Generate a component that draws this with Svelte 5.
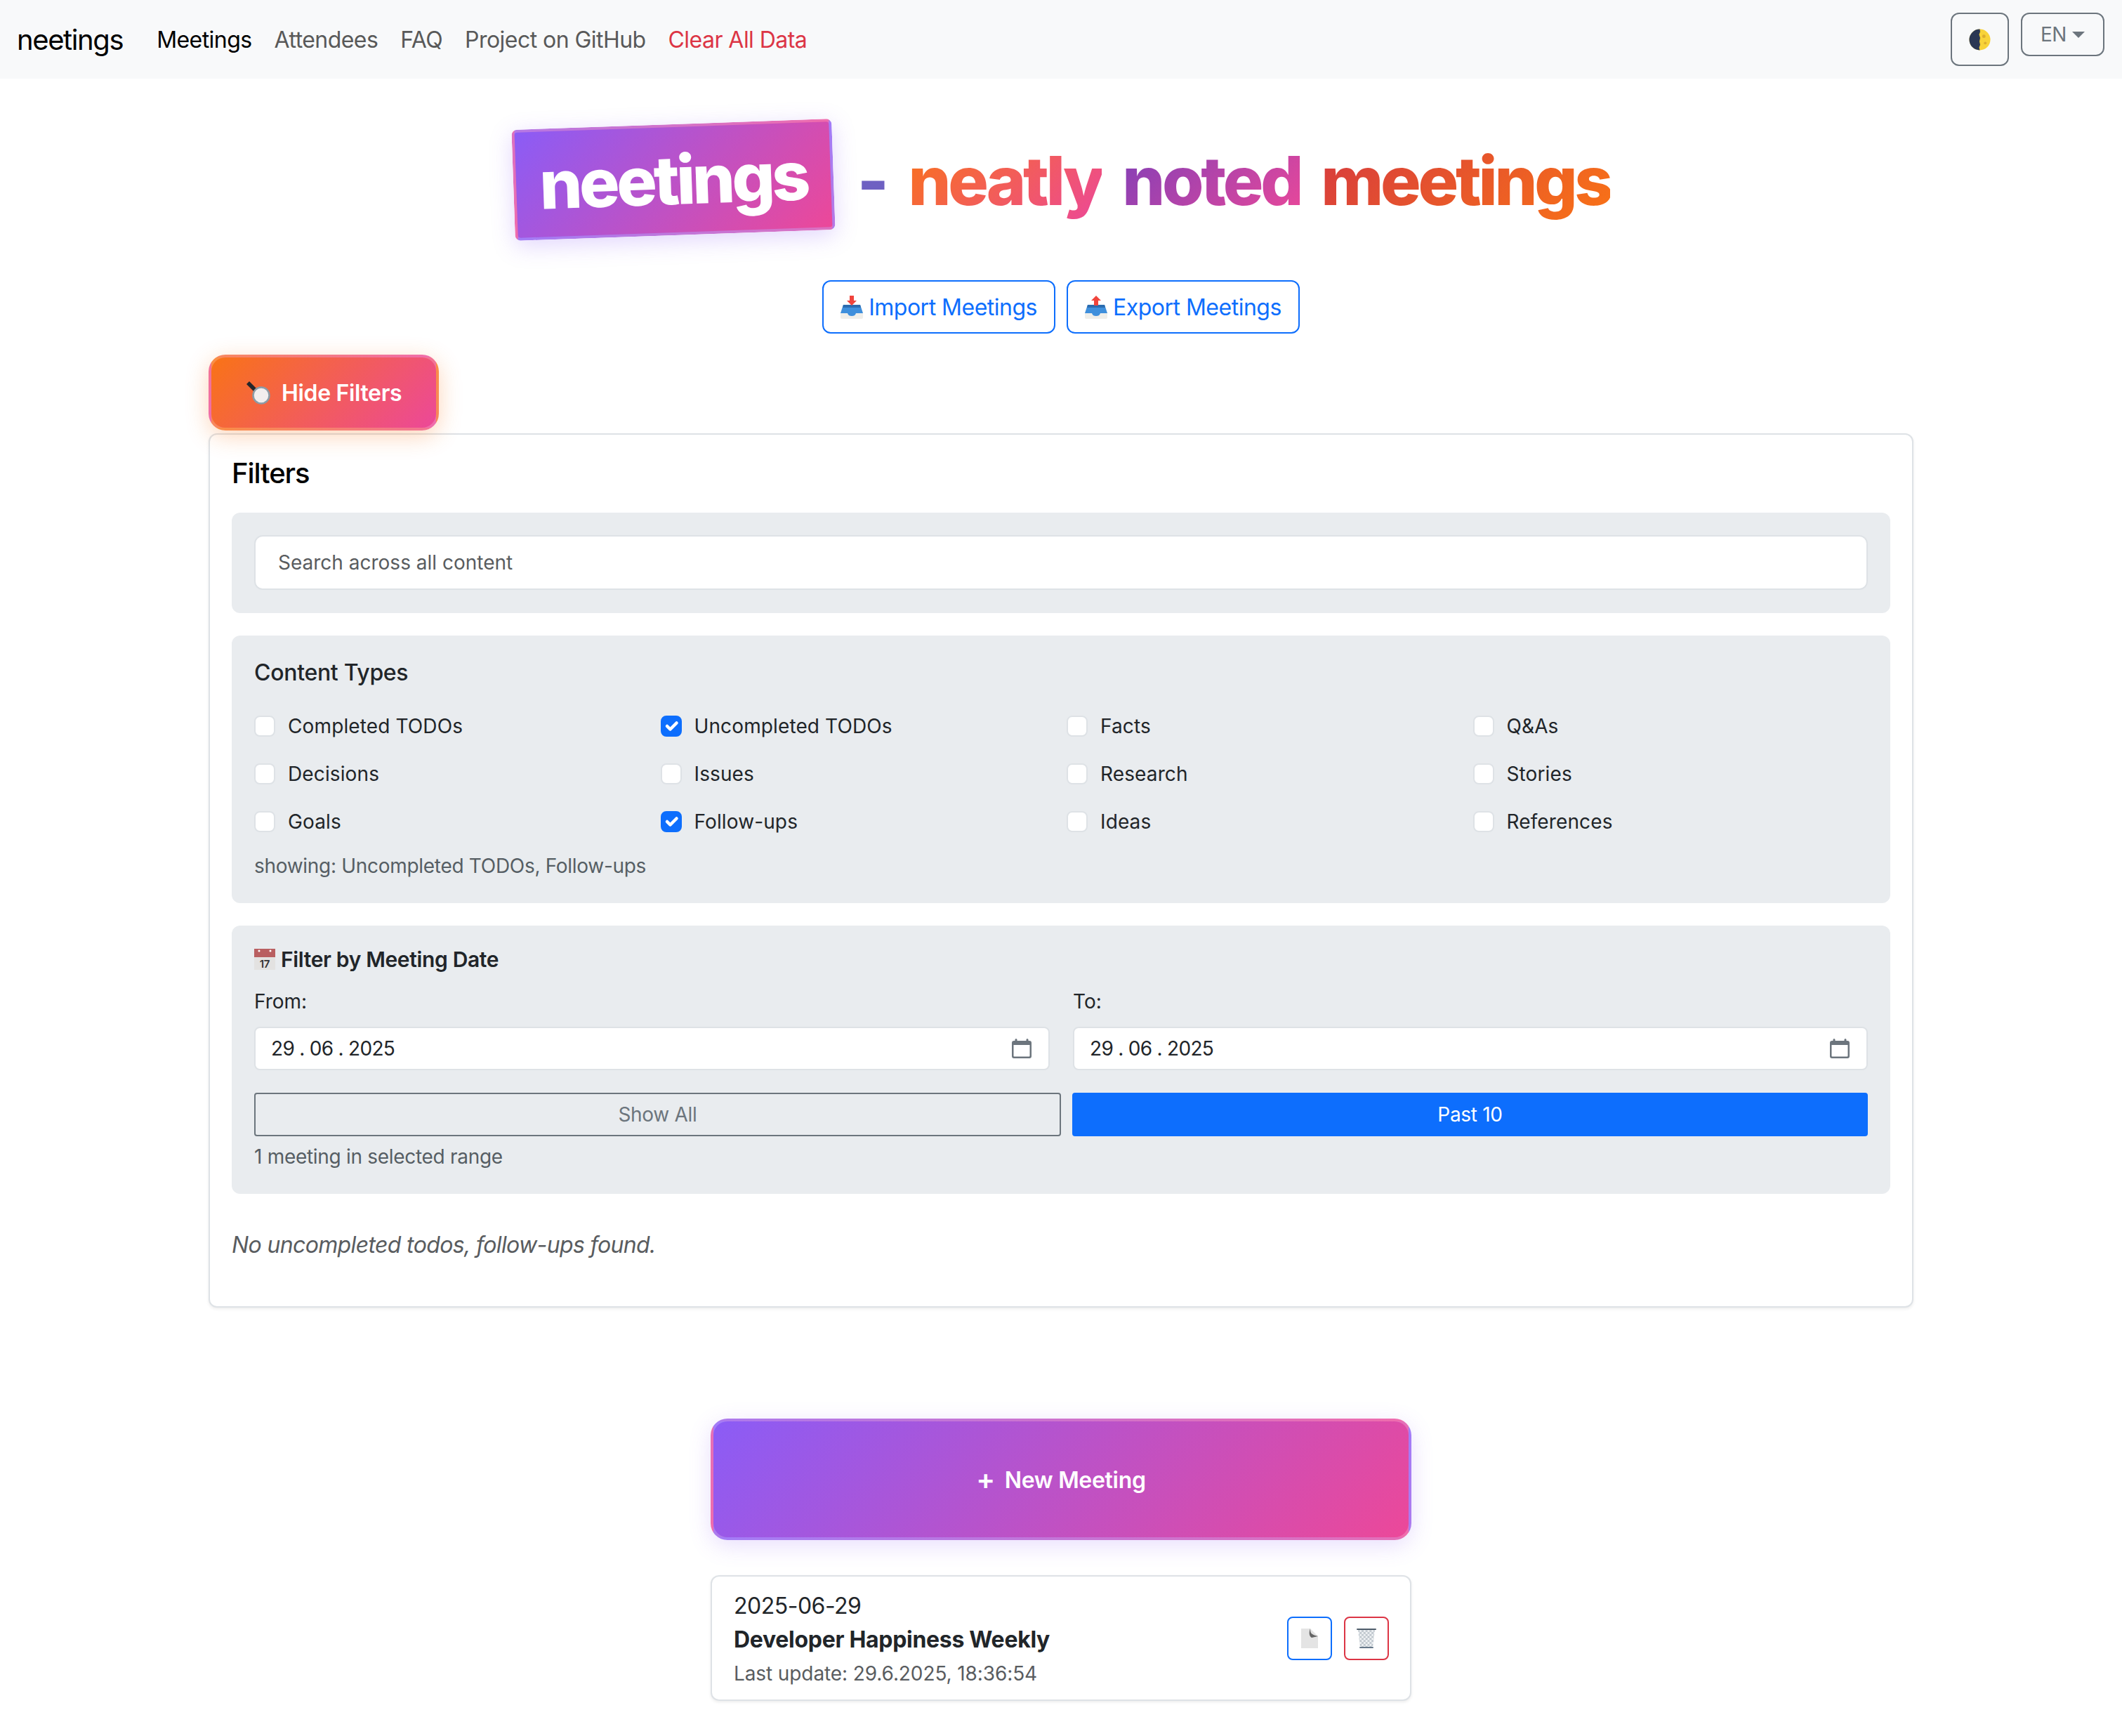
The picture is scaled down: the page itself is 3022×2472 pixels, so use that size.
<script lang="ts">
  const navLinks = [
    { label: 'Meetings', kind: 'active' },
    { label: 'Attendees', kind: '' },
    { label: 'FAQ', kind: '' },
    { label: 'Project on GitHub', kind: '' },
    { label: 'Clear All Data', kind: 'danger' }
  ];
  const contentTypes = [
    { label: 'Completed TODOs', on: false },
    { label: 'Uncompleted TODOs', on: true },
    { label: 'Facts', on: false },
    { label: 'Q&As', on: false },
    { label: 'Decisions', on: false },
    { label: 'Issues', on: false },
    { label: 'Research', on: false },
    { label: 'Stories', on: false },
    { label: 'Goals', on: false },
    { label: 'Follow-ups', on: true },
    { label: 'Ideas', on: false },
    { label: 'References', on: false }
  ];
  const dates = [{ label: 'From:' }, { label: 'To:' }];
</script>

{#snippet tray(up: boolean)}
  <svg class="tray" viewBox="0 0 32 34" aria-hidden="true">
    <path d="M2 18h28l2 8v6a2 2 0 0 1-2 2H2a2 2 0 0 1-2-2v-6z" fill="#efeeea" />
    <path d="M4 14h24l4 12H22c-1 3-3 4-6 4s-5-1-6-4H0z" fill="#3f8fdc" />
    <path d="M4 14h24l1 4H3z" fill="#2b6cb0" />
    {#if up}
      <path d="M16 1l7 7h-4v7h-6V8H9z" fill="#f0443c" />
    {:else}
      <path d="M13 1h6v7h4l-7 7-7-7h4z" fill="#f0443c" />
    {/if}
  </svg>
{/snippet}

{#snippet calendar()}
  <svg class="cal" viewBox="0 0 28 28" aria-hidden="true">
    <path fill="#6c757d" d="M6 0a1.500 1.500 0 0 1 1.500 1.500V3h13V1.500a1.500 1.500 0 0 1 3 0V3H25a3 3 0 0 1 3 3v19a3 3 0 0 1-3 3H3a3 3 0 0 1-3-3V6a3 3 0 0 1 3-3h1.500V1.500A1.500 1.500 0 0 1 6 0zM2.500 9v15.500a1 1 0 0 0 1 1h21a1 1 0 0 0 1-1V9z" />
  </svg>
{/snippet}

<nav class="navbar">
  <span class="brand">neetings</span>
  <ul class="links">
    {#each navLinks as link}
      <li class={link.kind}>{link.label}</li>
    {/each}
  </ul>
  <div class="nav-tools">
    <button class="tool theme" aria-label="Toggle theme">
      <svg viewBox="0 0 32 32" aria-hidden="true">
        <circle cx="16" cy="16" r="15.500" fill="#f8d339" />
        <path d="M16 .5a15.500 15.500 0 0 0 0 31l-1-4 1.500-4-1-5 1-5-1.500-5 1.500-4z" fill="#2a3754" />
        <circle cx="22" cy="11" r="2.500" fill="#dcae2e" />
        <circle cx="24" cy="21" r="2" fill="#dcae2e" />
      </svg>
    </button>
    <button class="tool lang">EN<span class="caret"></span></button>
  </div>
</nav>

<main class="page">
  <header class="hero">
    <span class="badge">neetings</span>
    <span class="dash">-</span>
    <h1 class="tagline">
      <span class="word w1">neatly</span>
      <span class="word w2">noted</span>
      <span class="word w3">meetings</span>
    </h1>
  </header>

  <div class="io">
    <button class="outline">{@render tray(false)}Import Meetings</button>
    <button class="outline">{@render tray(true)}Export Meetings</button>
  </div>

  <button class="hide">
    <svg viewBox="0 0 36 34" aria-hidden="true">
      <path d="M2 5l4-4 13 13-4 4z" fill="#23262b" />
      <circle cx="23" cy="21" r="11.500" fill="#f2eeee" stroke="#8c9ba6" stroke-width="2.500" />
    </svg>
    Hide Filters
  </button>

  <section class="card filters">
    <h5>Filters</h5>

    <div class="panel search">
      <input type="text" placeholder="Search across all content" />
    </div>

    <div class="panel types">
      <h6>Content Types</h6>
      <div class="grid">
        {#each contentTypes as t}
          <label class="opt">
            <span class="box" class:on={t.on}>
              {#if t.on}
                <svg viewBox="0 0 20 20" aria-hidden="true"><path fill="none" stroke="#fff" stroke-linecap="round" stroke-linejoin="round" stroke-width="3" d="M6 10l3 3 6-6" /></svg>
              {/if}
            </span>
            {t.label}
          </label>
        {/each}
      </div>
      <p class="muted">showing: Uncompleted TODOs, Follow-ups</p>
    </div>

    <div class="panel range">
      <div class="range-title">
        <svg viewBox="0 0 30 30" aria-hidden="true">
          <rect width="30" height="30" fill="#e3e2e1" />
          <rect width="30" height="12" fill="#b95f61" />
          <circle cx="7" cy="3" r="1.500" fill="#fff" />
          <circle cx="23" cy="3" r="1.500" fill="#fff" />
          <text x="15" y="27" text-anchor="middle" font-size="15" fill="#333">17</text>
        </svg>
        Filter by Meeting Date
      </div>
      <div class="dates">
        {#each dates as d}
          <div class="field">
            <span class="field-label">{d.label}</span>
            <div class="date">29 . 06 . 2025 {@render calendar()}</div>
          </div>
        {/each}
      </div>
      <div class="quick">
        <button class="show-all">Show All</button>
        <button class="past">Past 10</button>
      </div>
      <p class="muted">1 meeting in selected range</p>
    </div>

    <p class="none">No uncompleted todos, follow-ups found.</p>
  </section>

  <div class="meetings">
    <button class="new"><span class="plus">+</span> New Meeting</button>
    <article class="card meeting">
      <div class="info">
        <div class="m-date">2025-06-29</div>
        <div class="m-title">Developer Happiness Weekly</div>
        <div class="m-update">Last update: 29.6.2025, 18:36:54</div>
      </div>
      <div class="actions">
        <button class="act blue" aria-label="Open">
          <svg viewBox="0 0 24 28" aria-hidden="true">
            <path d="M0 0h13l11 11v17H0z" fill="#e4e4e4" />
            <path d="M13 0c0 5 1 7 3 8 3 2 6 2 8 3l-9 2c-4-2-4-8-2-13z" fill="#666" />
          </svg>
        </button>
        <button class="act red" aria-label="Delete">
          <svg viewBox="0 0 28 28" aria-hidden="true">
            <defs>
              <pattern id="mesh" width="4" height="4" patternUnits="userSpaceOnUse" patternTransform="rotate(45)">
                <rect width="4" height="4" fill="#eef1f3" />
                <path d="M0 0h4M0 0v4" stroke="#8a97a3" stroke-width="1" />
              </pattern>
            </defs>
            <path d="M2 1h24l-3 26H5z" fill="url(#mesh)" />
            <rect x="0" y="0" width="28" height="2" rx="1" fill="#4f5d6b" />
            <rect x="4" y="26" width="20" height="2" rx="1" fill="#66788a" />
          </svg>
        </button>
      </div>
    </article>
  </div>
</main>

<style>
  :global(body) { margin: 0; background: #fff; color: #212529; font-family: Inter, 'Liberation Sans', sans-serif; font-size: 32px; line-height: 1.5; letter-spacing: -0.5px; }
  button { font-family: inherit; letter-spacing: inherit; cursor: pointer; }
  p, h1, h5, h6, ul { margin: 0; padding: 0; }

  .navbar { height: 112px; box-sizing: border-box; background: #f8f9fa; display: flex; align-items: center; padding: 2px 25px 0 24px; }
  .brand { font-size: 40px; color: #000; margin-right: 48px; letter-spacing: -1.400px; }
  .links { list-style: none; display: flex; gap: 32px; color: #595959; letter-spacing: -0.550px; }
  .links .active { color: #000; }
  .links .danger { color: #dc3545; }
  .nav-tools { margin-left: auto; display: flex; gap: 17px; align-items: flex-start; align-self: flex-start; padding-top: 16px; }
  .tool { border: 2px solid #6c757d; border-radius: 12px; background: transparent; color: #6c757d; padding: 0; display: flex; align-items: center; justify-content: center; }
  .theme { width: 83px; height: 76px; }
  .theme svg { width: 31px; height: 31px; }
  .lang { width: 119px; height: 62px; font-size: 28px; gap: 8px; }
  .caret { border-top: 9px solid #6c757d; border-left: 9px solid transparent; border-right: 9px solid transparent; }

  .page { width: 2428px; margin: 0 auto; padding-bottom: 50px; }

  .hero { display: flex; align-items: center; justify-content: center; padding-top: 58px; height: 170px; gap: 36px; }
  .badge { display: block; width: 456px; height: 158px; margin-top: 2px; box-sizing: border-box; text-align: center; line-height: 150px; font-size: 96px; font-weight: 800; letter-spacing: -4.500px; color: #fff; border: 4px solid rgba(255, 255, 255, 0.2); border-radius: 8px; background: linear-gradient(135deg, #8b5cf6, #ec4899); transform: translateX(2px) rotate(-2deg); box-shadow: 0 8px 32px rgba(139, 92, 246, 0.25); }
  .dash { font-size: 96px; font-weight: 800; color: #6e60c2; line-height: 1; margin-right: -8px; margin-top: 4px; }
  .tagline { display: flex; gap: 29px; font-size: 96px; font-weight: 800; letter-spacing: -4.200px; line-height: 1.25; margin-top: 4px; }
  .word { background-clip: text; -webkit-background-clip: text; color: transparent; }
  .w1 { background-image: linear-gradient(135deg, #f97316, #ec4899); }
  .w2 { background-image: linear-gradient(135deg, #7e3fb8, #ec4899); }
  .w3 { background-image: linear-gradient(135deg, #d63a3f, #f97316); }

  .io { display: flex; justify-content: center; gap: 16px; margin-top: 59px; }
  .outline { height: 76px; padding: 0 24px; display: flex; align-items: center; gap: 8px; font-size: 32px; color: #0d6efd; background: #fff; border: 2px solid #0d6efd; border-radius: 12px; }
  .tray { width: 32px; height: 34px; }

  .hide { display: flex; align-items: center; gap: 16px; margin-top: 30px; width: 328px; height: 108px; box-sizing: border-box; padding: 0 0 0 48px; font-size: 32px; font-weight: 600; color: #fff; letter-spacing: -0.350px; border: 4px solid rgba(255, 255, 255, 0.2); border-radius: 24px; background: linear-gradient(135deg, #f97316, #ec4899); box-shadow: 0 8px 32px rgba(249, 115, 22, 0.3); position: relative; }
  .hide svg { width: 36px; height: 34px; }

  .card { background: #fff; border: 2px solid #dee2e6; border-radius: 12px; box-shadow: 0 2px 4px rgba(0, 0, 0, 0.075); box-sizing: border-box; }
  .filters { margin-top: 4px; padding: 31px 31px 48px; height: 1245px; }
  h5 { font-size: 40px; font-weight: 500; line-height: 1.2; color: #000; margin-bottom: 32px; letter-spacing: -1.100px; }
  .panel { background: #e9ecef; border-radius: 12px; padding: 32px; margin-bottom: 32px; }
  .search { height: 143px; box-sizing: border-box; }
  .search input { display: block; width: 100%; height: 78px; box-sizing: border-box; padding: 0 32px; font: inherit; font-size: 28px; letter-spacing: 0; border: 2px solid #dee2e6; border-radius: 12px; background: #fff; }
  .search input::placeholder { color: #595c5f; opacity: 1; }

  .types { height: 381px; box-sizing: border-box; padding-top: 34px; }
  h6 { font-size: 32px; font-weight: 500; line-height: 1.2; margin-bottom: 33px; letter-spacing: -0.300px; }
  .grid { display: grid; grid-template-columns: repeat(4, 578.500px); row-gap: 20px; }
  .opt { display: flex; align-items: center; gap: 18px; height: 48px; font-size: 28px; letter-spacing: 0.120px; }
  .box { width: 30px; height: 30px; box-sizing: border-box; border: 2px solid #dee2e6; border-radius: 8px; background: #fff; display: block; }
  .box svg { display: block; width: 30px; height: 30px; margin: -2px; }
  .box.on { background: #0d6efd; border-color: #0d6efd; }
  .muted { font-size: 28px; color: #565e64; letter-spacing: -0.300px; }
  .types .muted { margin-top: 18px; }

  .range { height: 382px; box-sizing: border-box; padding-top: 28px; }
  .range-title { display: flex; align-items: center; gap: 8px; font-weight: 600; font-size: 30px; line-height: 40px; letter-spacing: -0.350px; }
  .range-title svg { width: 30px; height: 30px; }
  .dates { display: grid; grid-template-columns: 1133px 1132px; gap: 33px; margin-top: 19px; }
  .field-label { display: block; font-size: 28px; line-height: 42px; margin-bottom: 15px; letter-spacing: 0; }
  .date { height: 62px; box-sizing: border-box; display: flex; align-items: center; justify-content: space-between; padding: 0 24px 0 22px; background: #fff; border: 2px solid #dee2e6; border-radius: 8px; font-size: 28px; letter-spacing: -0.700px; }
  .cal { width: 28px; height: 28px; }
  .quick { display: grid; grid-template-columns: 1149px 1133px; gap: 16px; margin-top: 32px; }
  .quick button { height: 62px; font-size: 28px; border-radius: 4px; letter-spacing: -0.300px; }
  .show-all { background: transparent; border: 2px solid #6c757d; color: #6c757d; }
  .past { background: #0d6efd; border: 2px solid #0d6efd; color: #fff; }
  .range .muted { margin-top: 8px; }

  .none { font-style: italic; color: #595c5f; margin-top: 49px; letter-spacing: -0.640px; }

  .meetings { width: 998px; margin: 158px auto 0; }
  .new { display: block; width: 100%; height: 173px; font-size: 32px; font-weight: 600; color: #fff; border: 4px solid rgba(255, 255, 255, 0.2); border-radius: 24px; background: linear-gradient(135deg, #8b5cf6, #ec4899); box-shadow: 0 8px 32px rgba(139, 92, 246, 0.2); letter-spacing: -0.300px; }
  .plus { margin-right: 6px; font-size: 40px; line-height: 1; vertical-align: -2px; }
  .meeting { margin-top: 50px; height: 179px; padding: 0 30px 0 31px; display: flex; align-items: center; justify-content: space-between; }
  .info { padding-top: 4px; }
  .m-date { line-height: 48px; }
  .m-title { font-weight: 700; line-height: 48px; letter-spacing: -0.300px; }
  .m-update { font-size: 28px; color: #595c5f; line-height: 48px; letter-spacing: -0.100px; }
  .actions { display: flex; gap: 17px; }
  .act { width: 64px; height: 62px; padding: 0; background: #fff; border-radius: 8px; display: flex; align-items: center; justify-content: center; }
  .act svg { width: 28px; height: 28px; }
  .blue { border: 2px solid #0d6efd; }
  .red { border: 2px solid #dc3545; }
</style>
